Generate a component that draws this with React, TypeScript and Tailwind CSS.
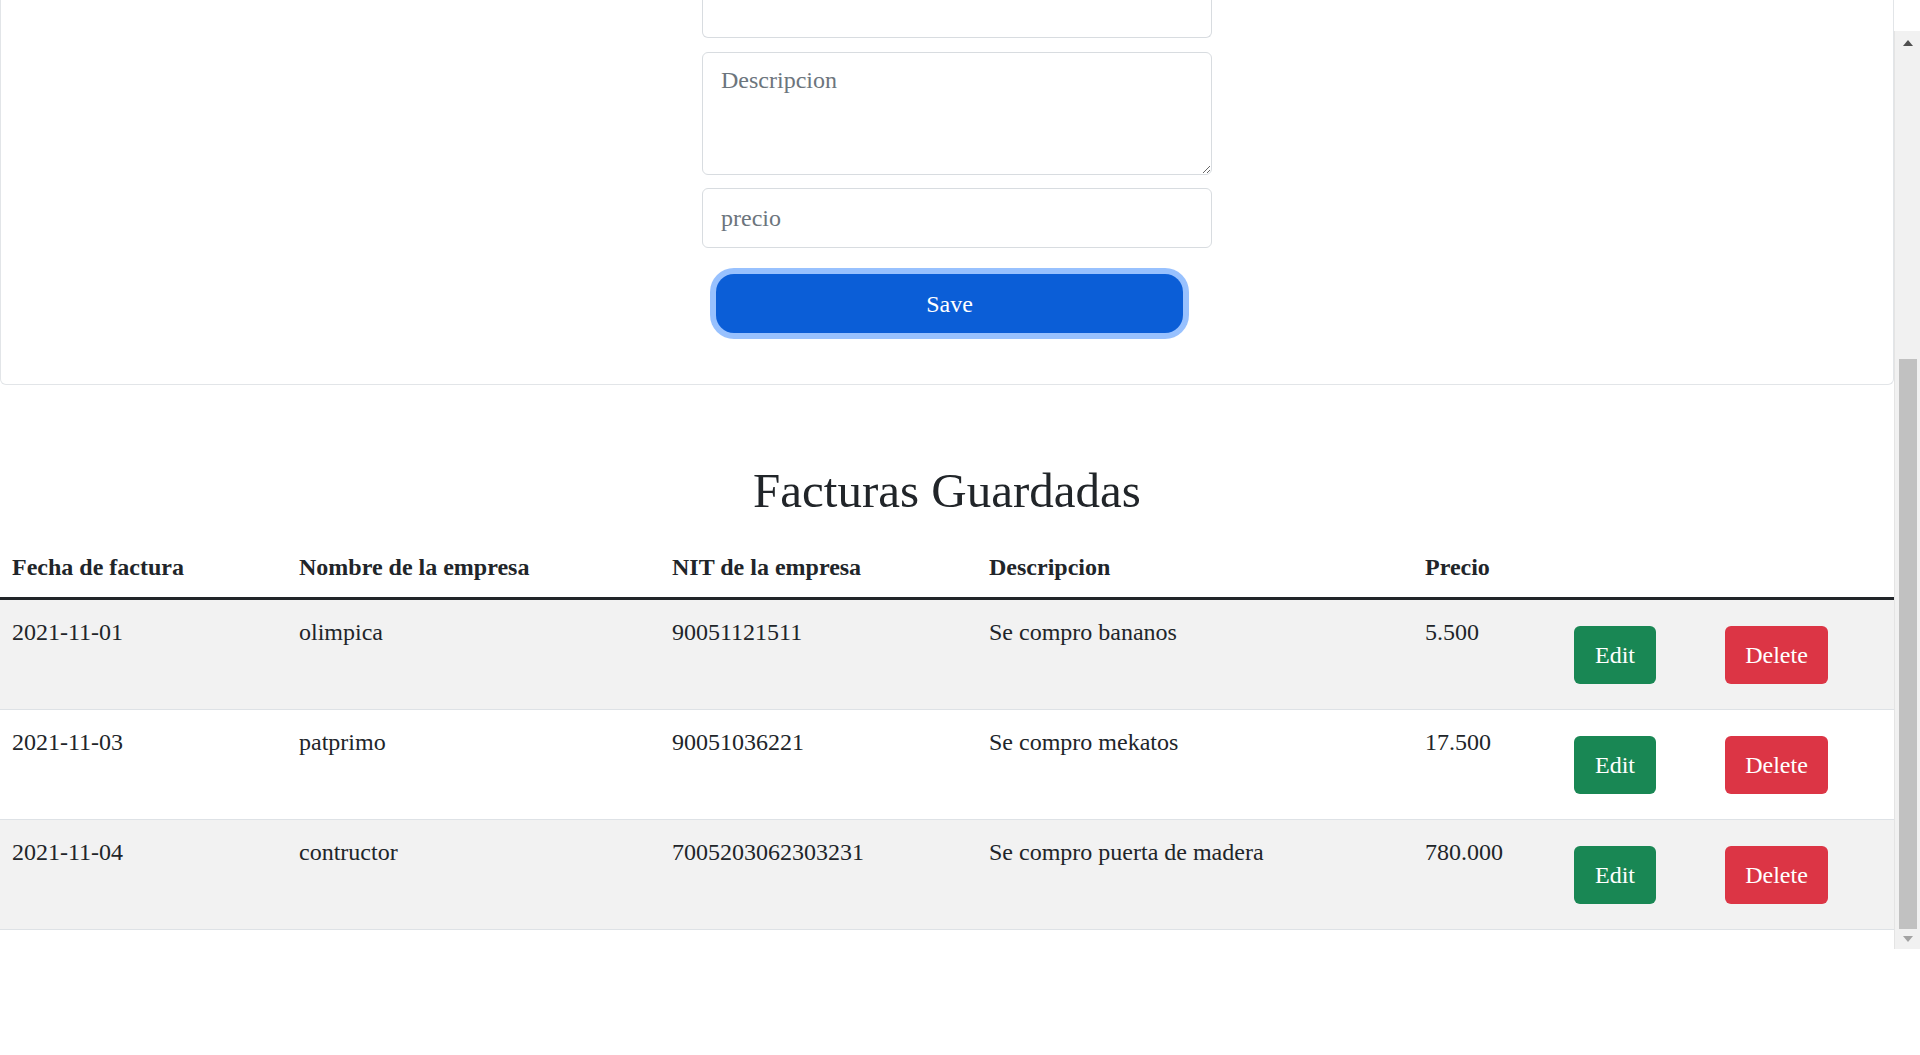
import React from "react";

interface Factura {
  fecha: string;
  empresa: string;
  nit: string;
  descripcion: string;
  precio: string;
}

const FACTURAS: Factura[] = [
  { fecha: "2021-11-01", empresa: "olimpica", nit: "90051121511", descripcion: "Se compro bananos", precio: "5.500" },
  { fecha: "2021-11-03", empresa: "patprimo", nit: "90051036221", descripcion: "Se compro mekatos", precio: "17.500" },
  { fecha: "2021-11-04", empresa: "contructor", nit: "7005203062303231", descripcion: "Se compro puerta de madera", precio: "780.000" },
];

const COLS = "grid grid-cols-[287px_373px_317px_436px_149px_151px_181px]";

function FakeScrollbar() {
  return (
    <div className="mt-[31px] flex h-[918px] w-[26px] shrink-0 flex-col border-l border-[#e4e4e4] bg-[#f1f1f1]">
      <div className="flex h-[24px] items-center justify-center">
        <svg width="10" height="6" viewBox="0 0 10 6">
          <polygon points="5,0 10,6 0,6" fill="#505050" />
        </svg>
      </div>
      <div className="flex-1 pt-[304px]">
        <div className="ml-[4px] h-[570px] w-[18px] bg-[#c1c1c1]" />
      </div>
      <div className="flex h-[20px] items-center justify-center">
        <svg width="10" height="6" viewBox="0 0 10 6">
          <polygon points="0,0 10,0 5,6" fill="#a3a3a3" />
        </svg>
      </div>
    </div>
  );
}

function FormCard() {
  return (
    <div className="mt-[31px] rounded-b-[6px] border-x border-b border-[#e2e5e8] pb-[51px] pl-[701px]">
      <div className="-mt-[31px] h-[38px] w-[510px] rounded-b-[6px] border-x border-b border-[#d8dce0] bg-white" />
      <textarea
        placeholder="Descripcion"
        className="mt-[14px] block h-[123px] w-[510px] rounded-[6px] border border-[#d8dce0] bg-white px-[18px] py-[9px] text-[24px] leading-[36px] text-[#212529] outline-none placeholder:text-[#6c757d]"
      />
      <input
        placeholder="precio"
        className="mt-[13px] block h-[60px] w-[510px] rounded-[6px] border border-[#d8dce0] bg-white px-[18px] text-[24px] leading-[36px] text-[#212529] outline-none placeholder:text-[#6c757d]"
      />
      <button className="ml-[14px] mt-[26px] block h-[59px] w-[467px] rounded-[18px] bg-[#0b5ed7] text-[24px] leading-[36px] text-white shadow-[0_0_0_6px_rgba(49,132,253,0.5)]">
        Save
      </button>
    </div>
  );
}

function FacturasTable() {
  return (
    <div>
      <div className={`${COLS} border-b-[3px] border-[#212529] text-[24px] font-bold leading-[36px]`}>
        {["Fecha de factura", "Nombre de la empresa", "NIT de la empresa", "Descripcion", "Precio", "", ""].map((h, i) => (
          <div key={i} className="p-[12px]">
            {h}
          </div>
        ))}
      </div>
      {FACTURAS.map((f, i) => (
        <div
          key={f.fecha}
          className={`${COLS} h-[110px] border-b border-[#dee2e6] text-[24px] leading-[36px] ${i % 2 === 0 ? "bg-[#f2f2f2]" : "bg-white"}`}
        >
          <div className="p-[12px] pt-[14px]">{f.fecha}</div>
          <div className="p-[12px] pt-[14px]">{f.empresa}</div>
          <div className="p-[12px] pt-[14px]">{f.nit}</div>
          <div className="p-[12px] pt-[14px]">{f.descripcion}</div>
          <div className="p-[12px] pt-[14px]">{f.precio}</div>
          <div className="p-[12px]">
            <button className="mt-[14px] h-[58px] w-[82px] rounded-[6px] bg-[#198754] text-[24px] text-white">Edit</button>
          </div>
          <div className="p-[12px]">
            <button className="mt-[14px] h-[58px] w-[103px] rounded-[6px] bg-[#dc3545] text-[24px] text-white">Delete</button>
          </div>
        </div>
      ))}
    </div>
  );
}

export default function App() {
  return (
    <div className="h-[1055px] w-[1920px] overflow-hidden bg-white font-['Liberation_Serif','Times_New_Roman',serif] text-[#212529]">
      <div className="flex">
        <div className="w-[1894px] shrink-0">
          <FormCard />
          <h1 className="mt-[76px] text-center text-[49px] font-normal leading-[60px]">Facturas Guardadas</h1>
          <div className="mt-[16px]">
            <FacturasTable />
          </div>
        </div>
        <FakeScrollbar />
      </div>
    </div>
  );
}
